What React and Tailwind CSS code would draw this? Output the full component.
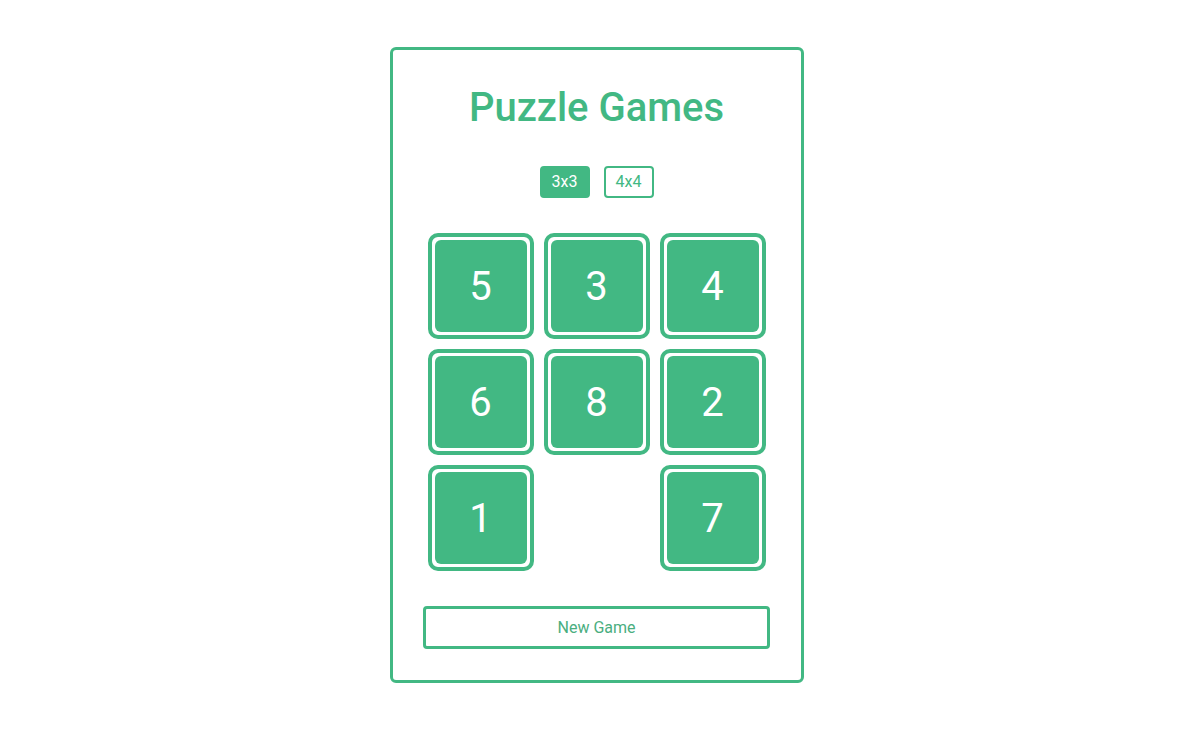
import React, { useState } from "react";

const Tile = ({ value }) => {
  if (!value) return <div className="w-[106px] h-[106px]" />;
  return (
    <div className="w-[106px] h-[106px] border-4 border-[#42b883] rounded-[10px] p-[3px] bg-white">
      <div className="w-full h-full bg-[#42b883] rounded-[6px] flex items-center justify-center text-white text-[40px] leading-none pt-[2px]">
        {value}
      </div>
    </div>
  );
};

export default function App() {
  const [size, setSize] = useState(3);
  const tiles = [5, 3, 4, 6, 8, 2, 1, 0, 7];

  return (
    <div className="w-full min-h-[733px] bg-white flex justify-center pl-[10px] font-['Roboto',sans-serif]">
      <div className="mt-[47px] mb-[50px] w-[414px] h-[636px] border-[3px] border-[#42b883] rounded-[6px] flex flex-col items-center pt-[34px]">
        <h1 className="text-[40px] leading-[48px] font-medium text-[#42b883]">Puzzle Games</h1>

        {/* size selector */}
        <div className="flex gap-[14px] mt-[34px]">
          {[3, 4].map((n) => (
            <button
              key={n}
              onClick={() => setSize(n)}
              className={`w-[50px] h-[32px] rounded-[4px] border-2 border-[#42b883] text-[16px] ${
                size === n ? "bg-[#42b883] text-white" : "bg-white text-[#42b883]"
              }`}
            >
              {n}x{n}
            </button>
          ))}
        </div>

        {/* board */}
        <div className="grid grid-cols-3 gap-[10px] mt-[35px]">
          {tiles.map((t, i) => (
            <Tile key={i} value={t} />
          ))}
        </div>

        <button className="mt-[35px] w-[347px] h-[43px] border-[3px] border-[#42b883] rounded-[4px] text-[16px] text-[#4aae80] bg-white">
          New Game
        </button>
      </div>
    </div>
  );
}
